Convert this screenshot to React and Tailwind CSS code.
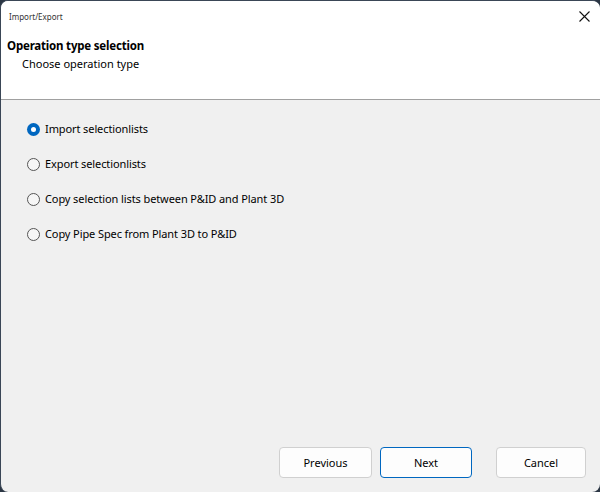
export default function App() {
  const options = [
    "Import selectionlists",
    "Export selectionlists",
    "Copy selection lists between P&ID and Plant 3D",
    "Copy Pipe Spec from Plant 3D to P&ID",
  ];
  return (
    <div className="w-[600px] h-[492px] bg-[#2b3644] overflow-hidden" style={{ fontFamily: '"Noto Sans", "Open Sans", sans-serif' }}>
      <div className="w-[600px] h-[492px] rounded-[8px] border-t border-l border-[#3a4656] bg-[#f0f0f0] overflow-hidden flex flex-col">
        <div className="bg-white h-[98px] flex flex-col relative">
          <div className="h-[32px] flex items-center pl-[8px] text-[8px] text-[#333]">Import/Export</div>
          <button className="absolute right-[9px] top-[8px] w-[14px] h-[14px] flex items-center justify-center">
            <svg width="11" height="11" viewBox="0 0 11 11"><path d="M0.5 0.5 L10.5 10.5 M10.5 0.5 L0.5 10.5" stroke="#111" strokeWidth="1.1" /></svg>
          </button>
          <div className="pl-[6px] mt-[5px] text-[11.5px] font-bold text-black leading-[16px] tracking-[-0.2px]">Operation type selection</div>
          <div className="pl-[21px] mt-[2px] text-[11px] text-black leading-[16px]">Choose operation type</div>
        </div>
        <div className="h-[1px] bg-[#a0a0a0]" />
        <div className="flex-1 flex flex-col">
          <div className="flex flex-col pl-[26px] pt-[21px] gap-[19px]">
            {options.map((o, i) => (
              <label key={o} className="flex items-center gap-[5px] h-[16px] text-[11px] text-black tracking-[-0.1px]">
                {i === 0 ? (
                  <span className="w-[13px] h-[13px] rounded-full bg-[#0067c0] flex items-center justify-center">
                    <span className="w-[5px] h-[5px] rounded-full bg-white" />
                  </span>
                ) : (
                  <span className="w-[13px] h-[13px] rounded-full border border-[#555] bg-[#f6f6f6]" />
                )}
                <span>{o}</span>
              </label>
            ))}
          </div>
          <div className="flex-1" />
          <div className="flex pb-[14px] pl-[278px]">
            <button className="w-[93px] h-[31px] rounded-[4px] border border-[#d0d0d0] bg-[#fdfdfd] text-[11px] text-black leading-none">Previous</button>
            <button className="ml-[8px] w-[92px] h-[31px] rounded-[4px] border border-[#0067c0] bg-[#fdfdfd] text-[11px] text-black leading-none">Next</button>
            <button className="ml-[24px] w-[90px] h-[31px] rounded-[4px] border border-[#d0d0d0] bg-[#fdfdfd] text-[11px] text-black leading-none">Cancel</button>
          </div>
        </div>
      </div>
    </div>
  );
}
